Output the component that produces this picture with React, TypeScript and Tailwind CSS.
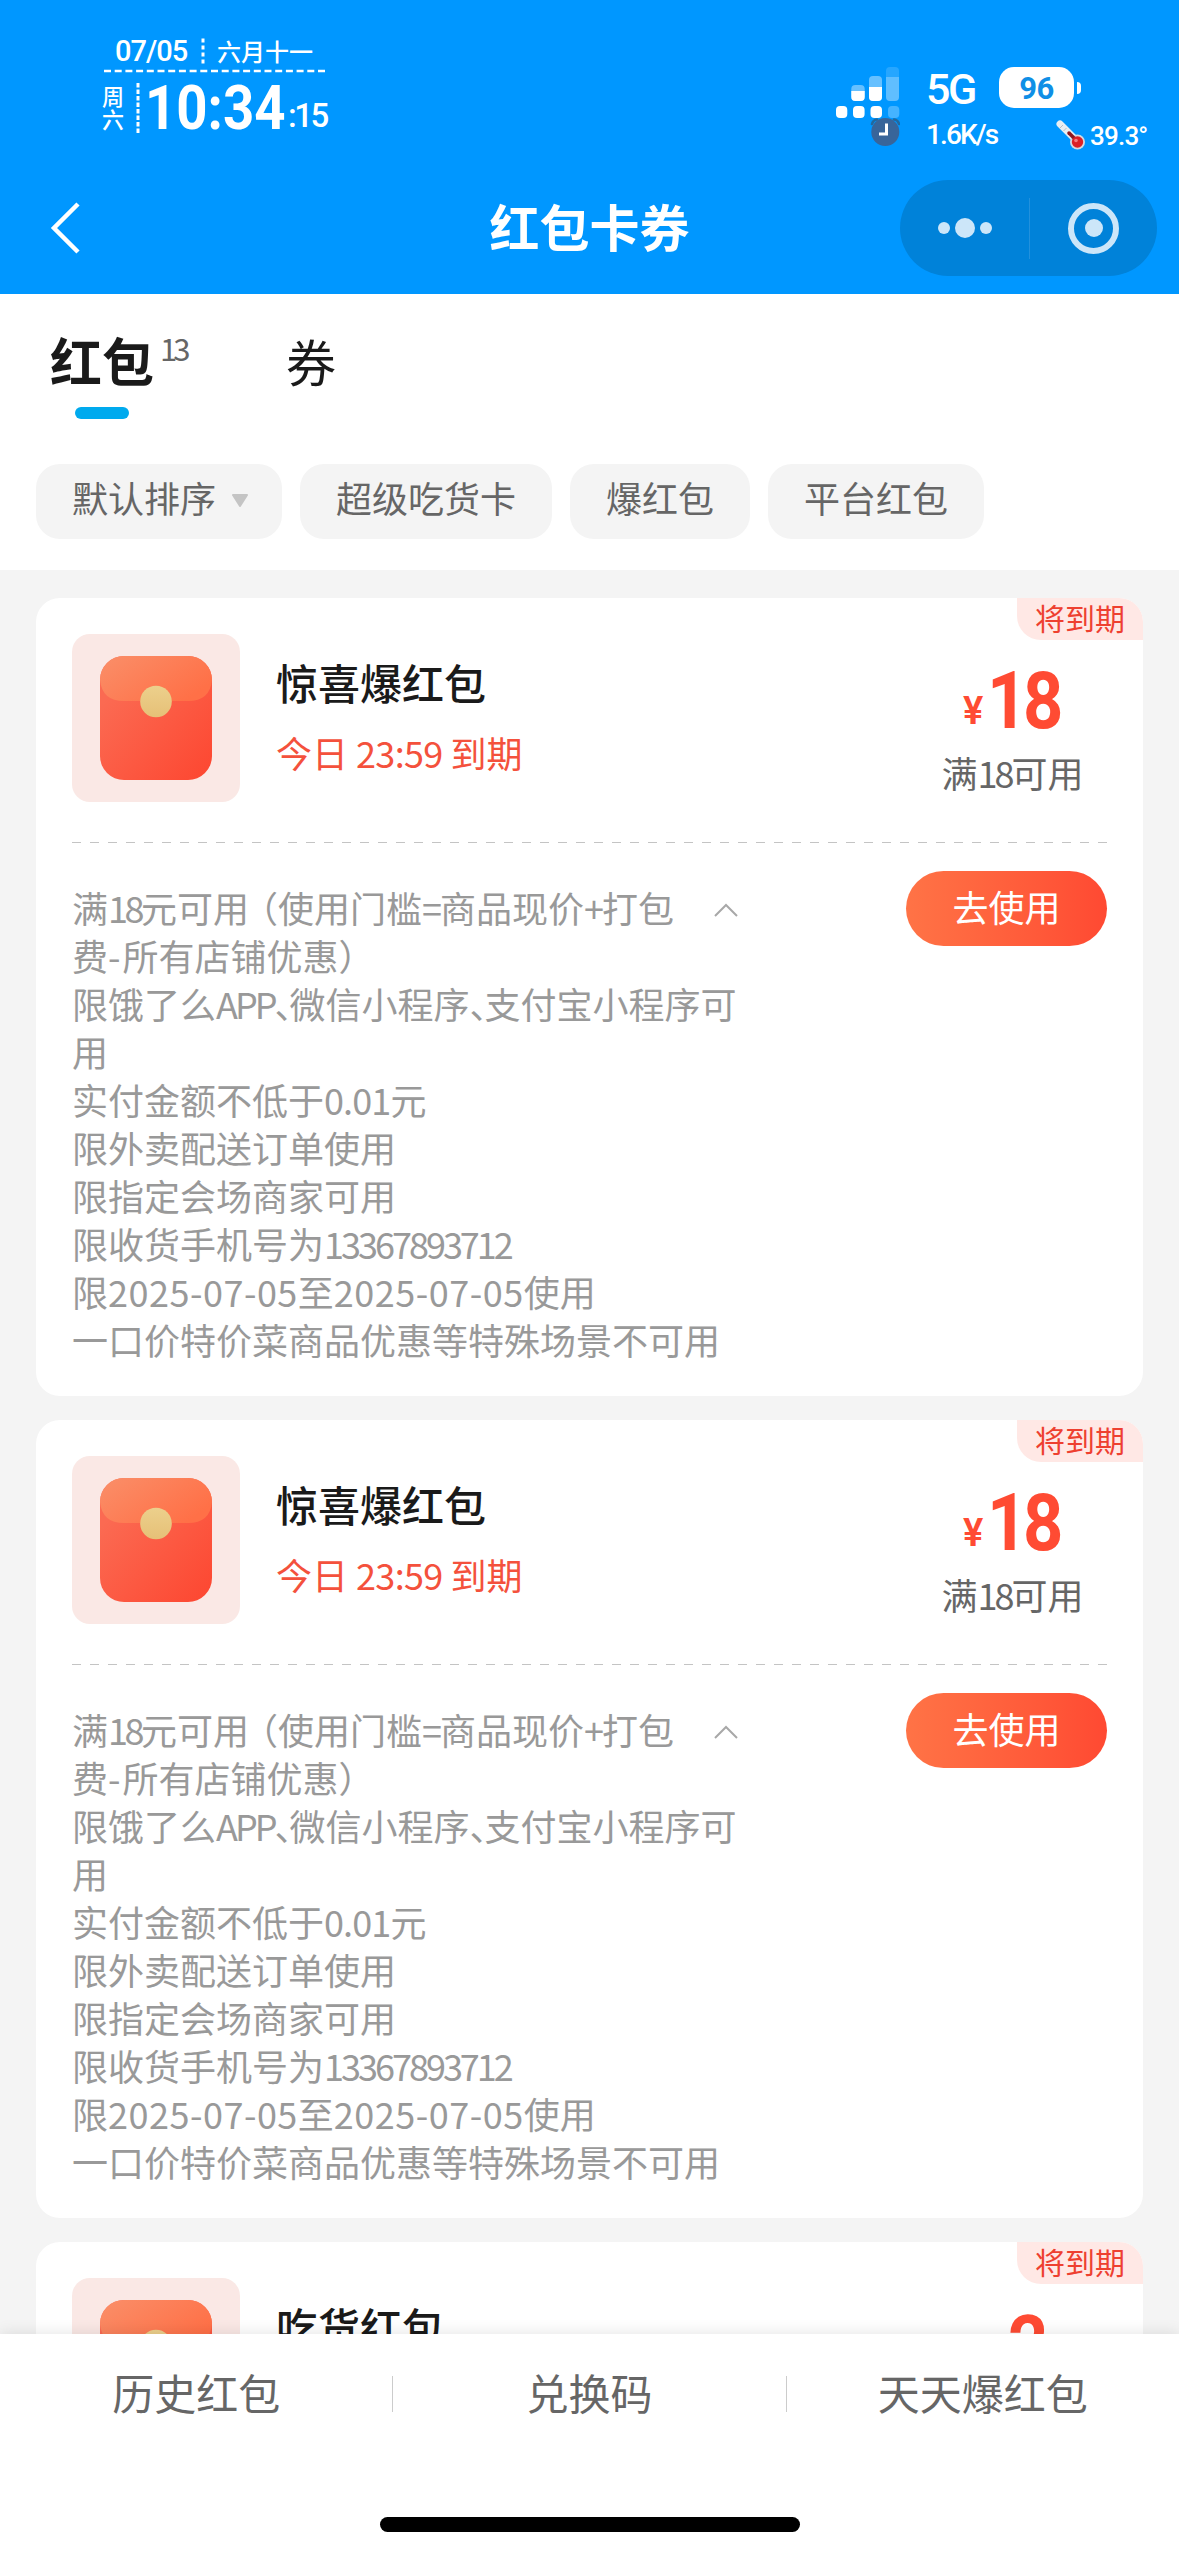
import { Fragment } from "react";

const filters = ["超级吃货卡", "爆红包", "平台红包"];

const rules = [
  { text: "满18元可用（使用门槛=商品现价+打包", latin: "tracking-[-3.500px]" },
  { text: "费-所有店铺优惠）", latin: "tracking-[2px]" },
  { text: "限饿了么APP、微信小程序、支付宝小程序可", latin: "tracking-[-3px]" },
  { text: "用", latin: "" },
  { text: "实付金额不低于0.01元", latin: "tracking-[-0.900px]" },
  { text: "限外卖配送订单使用", latin: "" },
  { text: "限指定会场商家可用", latin: "" },
  { text: "限收货手机号为13367893712", latin: "tracking-[-3px]" },
  { text: "限2025-07-05至2025-07-05使用", latin: "tracking-[0.500px]" },
  { text: "一口价特价菜商品优惠等特殊场景不可用", latin: "" },
];

const coupons = [
  { title: "惊喜爆红包", amount: "18", limit: "满18可用" },
  { title: "惊喜爆红包", amount: "18", limit: "满18可用" },
  { title: "吃货红包", amount: "2" },
];

// Latin runs and the narrow punctuation get their own tracking
function Mixed({ text, latin }: { text: string; latin: string }) {
  return (
    <>
      {text.split(/([A-Za-z0-9.:\-]+|[=+]|、|（)/).map((part, i) => {
        if (part === "、") return <span key={i} className="tracking-[-21px]">{part}</span>;
        if (part === "（") return <span key={i} className="-ml-[7px]">{part}</span>;
        if (part === "=" || part === "+") return <span key={i} className="tracking-[-2px]">{part}</span>;
        if (i % 2 === 1) return <span key={i} className={latin}>{part}</span>;
        return <Fragment key={i}>{part}</Fragment>;
      })}
    </>
  );
}

function SignalIcon() {
  return (
    <svg className="w-16 h-[82px]" viewBox="0 0 64 82" fill="white">
      <rect x="15.3" y="19" width="13.4" height="16" rx="4" opacity="0.4" />
      <path d="M15.3 25h13.4v6a4 4 0 0 1-4 4h-5.4a4 4 0 0 1-4-4z" />
      <rect x="33" y="10" width="13" height="25" rx="4" opacity="0.4" />
      <path d="M33 21h13v10a4 4 0 0 1-4 4h-5a4 4 0 0 1-4-4z" />
      <rect x="50" y="1" width="13" height="34" rx="4" opacity="0.15" />
      <path d="M50 11h13v20a4 4 0 0 1-4 4h-5a4 4 0 0 1-4-4z" opacity="0.27" />
      <rect x="0" y="40" width="11.3" height="12" rx="4" />
      <rect x="17" y="40" width="11.6" height="12" rx="4" />
      <rect x="34.5" y="40" width="11.5" height="12" rx="4" />
      <rect x="52" y="40" width="11.3" height="12" rx="4" opacity="0.27" />
      <g stroke="#22699f" strokeWidth="2.6" strokeLinecap="round" fill="none">
        <path d="M36 58q1-4 5-4.500M58 53.500q4 .5 5 4.500" />
      </g>
      <circle cx="49.300" cy="66" r="14" fill="#38659a" />
      <path d="M50.500 57.500v10.500h-7.500" fill="none" stroke="white" strokeWidth="3" />
    </svg>
  );
}

function Thermometer() {
  return (
    <svg className="w-[30px] h-[30px]" viewBox="0 0 30 30" fill="none">
      <path d="M4 4L19 19" stroke="#e9eef2" strokeWidth="7" strokeLinecap="round" />
      <path d="M4 8l3-3M7.500 11l3-3M11 14.500l3-3" stroke="#b7bfc8" strokeWidth="1" />
      <circle cx="21.500" cy="22" r="7.500" fill="#d5d9df" />
      <path d="M13 13L20 20" stroke="#8f1720" strokeWidth="3.500" strokeLinecap="round" />
      <circle cx="21.500" cy="22" r="5.700" fill="#dc2026" />
      <circle cx="20" cy="20.500" r="1.800" fill="#f47c80" />
    </svg>
  );
}

function StatusBar() {
  return (
    <div className="flex justify-between h-[180px] pl-[102px] pr-[30px] text-white">
      <div className="pt-[33px]">
        <div className="flex items-center h-9 pl-[13px]">
          <span className="font-['Roboto'] font-medium text-[29px] tracking-[-1px] w-[86px] pt-[2px]">07/05</span>
          <svg className="w-[4px] h-7 mr-[12px]" viewBox="0 0 4 28">
            <path d="M2 1.500v26" stroke="white" strokeWidth="3" strokeDasharray="4 3" />
          </svg>
          <span className="font-medium text-[24px]">六月十一</span>
        </div>
        <svg className="w-[224px] h-1" viewBox="0 0 224 4">
          <path d="M2 2h222" stroke="white" strokeWidth="2.700" strokeDasharray="7 3.700" />
        </svg>
        <div className="flex items-start pt-[10px]">
          <div className="w-[22px] text-[22px] leading-[23px] pt-[1px] font-medium">
            <div>周</div>
            <div>六</div>
          </div>
          <svg className="w-1 h-[50px] ml-[12px]" viewBox="0 0 4 50">
            <path d="M2 0v50" stroke="white" strokeWidth="3" strokeDasharray="4.500 2" />
          </svg>
          <span className="w-[141px] origin-left scale-x-[0.88] font-['Roboto'] font-bold text-[62px] leading-[50px] whitespace-nowrap ml-[5px]">
            10:34
          </span>
          <span className="font-['Roboto'] font-medium text-[33px] leading-[66px] tracking-[-2.500px] ml-[2px]">:15</span>
        </div>
      </div>
      <div className="flex pt-[66px] w-[313px]">
        <SignalIcon />
        <div className="pl-[26px] font-['Roboto'] font-medium">
          <div className="flex items-center h-[43px]">
            <span className="w-[73px] text-[43px] tracking-[-2.500px] pt-1">5G</span>
            <span className="w-[75px] h-[41px] leading-[43px] rounded-[15px] bg-white text-[#0f8fe6] text-center text-[31px] font-bold tracking-[-0.500px]">
              96
            </span>
            <span className="w-1 h-3 ml-[3px] rounded-r-full bg-white" />
          </div>
          <div className="flex items-center mt-[10px] h-[32px]">
            <span className="w-[130px] text-[28px] tracking-[-1.900px]">1.6K/s</span>
            <Thermometer />
            <span className="text-[26px] pl-[4px] pt-[2px] tracking-[-0.800px]">39.3°</span>
          </div>
        </div>
      </div>
    </div>
  );
}

function NavBar() {
  return (
    <div className="grid grid-cols-[1fr_auto_1fr] items-center h-[96px]">
      <svg className="w-8 h-[54px] ml-[50px]" viewBox="0 0 32 54" fill="none">
        <path d="M28 3L4 27L28 51" stroke="white" strokeWidth="4.500" />
      </svg>
      <h1 className="text-[50px] leading-[60px] font-bold text-white pb-[6px]">红包卡券</h1>
      <div className="flex items-center justify-self-end w-[257px] h-[96px] mr-[22px] rounded-full bg-[#0082d9]">
        <div className="flex items-center justify-center gap-[5px] w-[129px]">
          <span className="size-3 rounded-full bg-[#cce6f9]" />
          <span className="size-5 rounded-full bg-[#cce6f9]" />
          <span className="size-3 rounded-full bg-[#cce6f9]" />
        </div>
        <div className="w-px h-[61px] bg-[#2291dd]" />
        <div className="flex items-center justify-center size-[51px] ml-[38px] border-[6px] border-[#cce6f9] rounded-full">
          <span className="size-[18px] rounded-full bg-[#cce6f9]" />
        </div>
      </div>
    </div>
  );
}

function Envelope() {
  return (
    <svg className="w-[168px] h-[168px] shrink-0" viewBox="0 0 168 168">
      <defs>
        <linearGradient id="body" x1="0" y1="0" x2="1" y2="1">
          <stop offset="0.2" stopColor="#fb6a52" />
          <stop offset="1" stopColor="#fd4630" />
        </linearGradient>
        <linearGradient id="flap" x1="0" y1="0" x2="1" y2="0.6">
          <stop offset="0" stopColor="#fa8f69" />
          <stop offset="1" stopColor="#ff7047" />
        </linearGradient>
        <linearGradient id="seal" x1="0" y1="0" x2="0" y2="1">
          <stop offset="0" stopColor="#ecd08c" />
          <stop offset="1" stopColor="#e6c077" />
        </linearGradient>
      </defs>
      <rect width="168" height="168" rx="18" fill="#fae8e5" />
      <rect x="28" y="22" width="112" height="124" rx="24" fill="url(#body)" />
      <path d="M52 22h64a24 24 0 0 1 24 24q-2 21-24 21H52q-22 0-24-21a24 24 0 0 1 24-24z" fill="url(#flap)" />
      <circle cx="84" cy="67.500" r="15.800" fill="url(#seal)" />
    </svg>
  );
}

function Coupon({ title, amount, limit }: { title: string; amount: string; limit?: string }) {
  return (
    <div className="relative h-[798px] shrink-0 px-9 pt-9 rounded-[24px] bg-white">
      <span className="absolute top-0 right-0 h-[42px] px-[18px] rounded-bl-[24px] rounded-tr-[24px] bg-[#ffe8e5] text-[#ee4030] text-[30px] leading-[39px]">
        将到期
      </span>

      <div className="flex h-[208px]">
        <Envelope />
        <div className="flex-1 pl-9 pt-[21px]">
          <h2 className="text-[42px] leading-[54px] font-medium text-[#1a1a1a]">{title}</h2>
          <p className="mt-[19px] text-[36px] leading-[48px] text-[#f4513c]">
            <Mixed text="今日 23:59 到期" latin="tracking-[-0.700px]" />
          </p>
        </div>
        <div className="w-[189px] pt-[34px] text-center">
          <div className="flex items-baseline justify-center h-[64px] font-['Roboto'] font-bold text-[#ff4b33] leading-[66px]">
            <span className="text-[38px] font-semibold -translate-y-[4px]">¥</span>
            <span className="text-[80px] tracking-[-5px] ml-[4px] -mr-[7px] origin-left scale-x-[0.88]">{amount}</span>
          </div>
          {limit && (
            <p className="mt-[16px] text-[36px] leading-[48px] text-[#666]">
              <Mixed text={limit} latin="tracking-[-3px]" />
            </p>
          )}
        </div>
      </div>

      <svg className="w-full h-px" viewBox="0 0 1035 1" preserveAspectRatio="none">
        <path d="M0 .5h1035" stroke="#c4c4c4" strokeWidth="1" strokeDasharray="9 9" />
      </svg>

      {limit && (
        <div className="flex pt-[40px] text-[36px] leading-[48px] text-[#999]">
          <div className="w-[642px] whitespace-nowrap">
            {rules.map((rule) => (
              <p key={rule.text}>
                <Mixed text={rule.text} latin={rule.latin} />
              </p>
            ))}
          </div>
          <svg className="w-6 h-[14px] mt-[20px] shrink-0" viewBox="0 0 24 14" fill="none">
            <path d="M1 13L12 2L23 13" stroke="#a8a8a8" strokeWidth="2" />
          </svg>
          <button className="w-[201px] h-[75px] -mt-[12px] ml-auto rounded-full bg-linear-to-r from-[#ff7346] to-[#ff4932] text-white leading-[70px] pb-[5px]">
            去使用
          </button>
        </div>
      )}
    </div>
  );
}

export default function App() {
  return (
    <div className="flex flex-col w-[1179px] h-[2556px] overflow-hidden bg-[#f4f4f4] font-['Noto_Sans_CJK_SC',sans-serif]">
      <header className="h-[294px] shrink-0 bg-[#0097ff]">
        <StatusBar />
        <NavBar />
      </header>

      <div className="h-[276px] shrink-0 bg-white px-9">
        <div className="flex h-[170px] pl-[14px] pt-[29px] text-[#1a1a1a]">
          <div className="w-[105px]">
            <div className="text-[52px] leading-[74px] font-bold">红包</div>
            <div className="w-[54px] h-3 mt-[10px] ml-[25px] rounded-full bg-[#00aaee]" />
          </div>
          <span className="w-[131px] pl-[5px] text-[31px] leading-[50px] tracking-[-4px] text-[#666]">13</span>
          <span className="text-[50px] leading-[74px]">券</span>
        </div>
        <div className="flex gap-[18px] text-[36px] leading-[67px] text-[#666]">
          <div className="flex items-center w-[246px] h-[75px] pl-9 pb-[8px] rounded-[24px] bg-[#f4f4f4]">
            默认排序
            <svg className="w-[18px] h-[13px] ml-[15px] mt-[6px]" viewBox="0 0 18 13">
              <path d="M2 1h14L9 12z" fill="#c4c4c4" stroke="#c4c4c4" strokeWidth="2" strokeLinejoin="round" />
            </svg>
          </div>
          {filters.map((name) => (
            <div key={name} className="h-[75px] px-9 rounded-[24px] bg-[#f4f4f4]">
              {name}
            </div>
          ))}
        </div>
      </div>

      <main className="flex flex-col gap-6 h-[1764px] shrink-0 overflow-hidden px-9 pt-7">
        {coupons.map((coupon, i) => (
          <Coupon key={i} {...coupon} />
        ))}
      </main>

      <footer className="relative flex flex-col items-center h-[222px] shrink-0 bg-white shadow-[0_0_15px_rgba(0,0,0,0.12)]">
        <div className="flex items-center w-full h-[120px] text-[42px] text-[#666] divide-x divide-[#ccc] text-center">
          <span className="flex-1 h-9 leading-[32px]">历史红包</span>
          <span className="flex-1 h-9 leading-[32px]">兑换码</span>
          <span className="flex-1 h-9 leading-[32px]">天天爆红包</span>
        </div>
        <div className="w-[420px] h-[15px] mt-[63px] rounded-full bg-black" />
      </footer>
    </div>
  );
}
